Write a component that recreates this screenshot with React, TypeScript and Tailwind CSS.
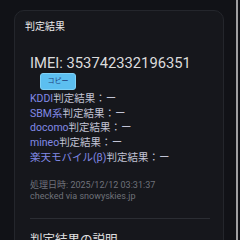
const carriers = [
  { name: "KDDI", result: "ー" },
  { name: "SBM系", result: "ー" },
  { name: "docomo", result: "ー" },
  { name: "mineo", result: "ー" },
  { name: "楽天モバイル(β)", result: "ー" },
]

export default function App() {
  return (
    <div
      className="relative h-[240px] w-[240px] overflow-hidden bg-[#111217] pt-[10px] pl-[14px]"
      style={{ fontFamily: 'Roboto, "Noto Sans CJK JP", sans-serif' }}
    >
      {/* result card */}
      <div className="w-[210px] rounded-[10px] border border-[#24262c] bg-[#16171c] pb-6">
        <div className="px-[10px] pt-[9px] text-[10px] leading-[13px] text-[#ececec]">判定結果</div>

        <div className="px-[15px] pt-[21px]">
          <div className="text-[14.75px] leading-[18px] text-[#dcdcdc]">IMEI: 353742332196351</div>
          <button className="ml-[10px] mt-[1px] flex h-[17px] w-[36px] items-center justify-center rounded-[3px] border border-[#7fd2f7] bg-[#5cbff0] text-[7px] leading-none text-[#1d3c78]">
            コピー
          </button>

          <div className="mt-[2px] flex flex-col">
            {carriers.map((c) => (
              <div key={c.name} className="text-[10.5px] leading-[14.7px] text-[#c2c4d6]">
                <span className="text-[#8189e6]">{c.name}</span>判定結果：{c.result}
              </div>
            ))}
          </div>

          <div className="mt-[14px] text-[9px] leading-[11px] text-[#6f727a]">
            <div>処理日時: 2025/12/12 03:31:37</div>
            <div>checked via snowyskies.jp</div>
          </div>

          <div className="mt-[16px] mr-[-2px] h-px bg-[#2b2d33]" />

          <div className="mt-[13px] text-[12.5px] leading-[16px] text-[#e0e0e0]">判定結果の説明</div>
        </div>
      </div>

      {/* scrollbar */}
      <div className="absolute top-0 right-[2px] h-full w-[2px] bg-[#a0a0a2]" />
    </div>
  )
}
